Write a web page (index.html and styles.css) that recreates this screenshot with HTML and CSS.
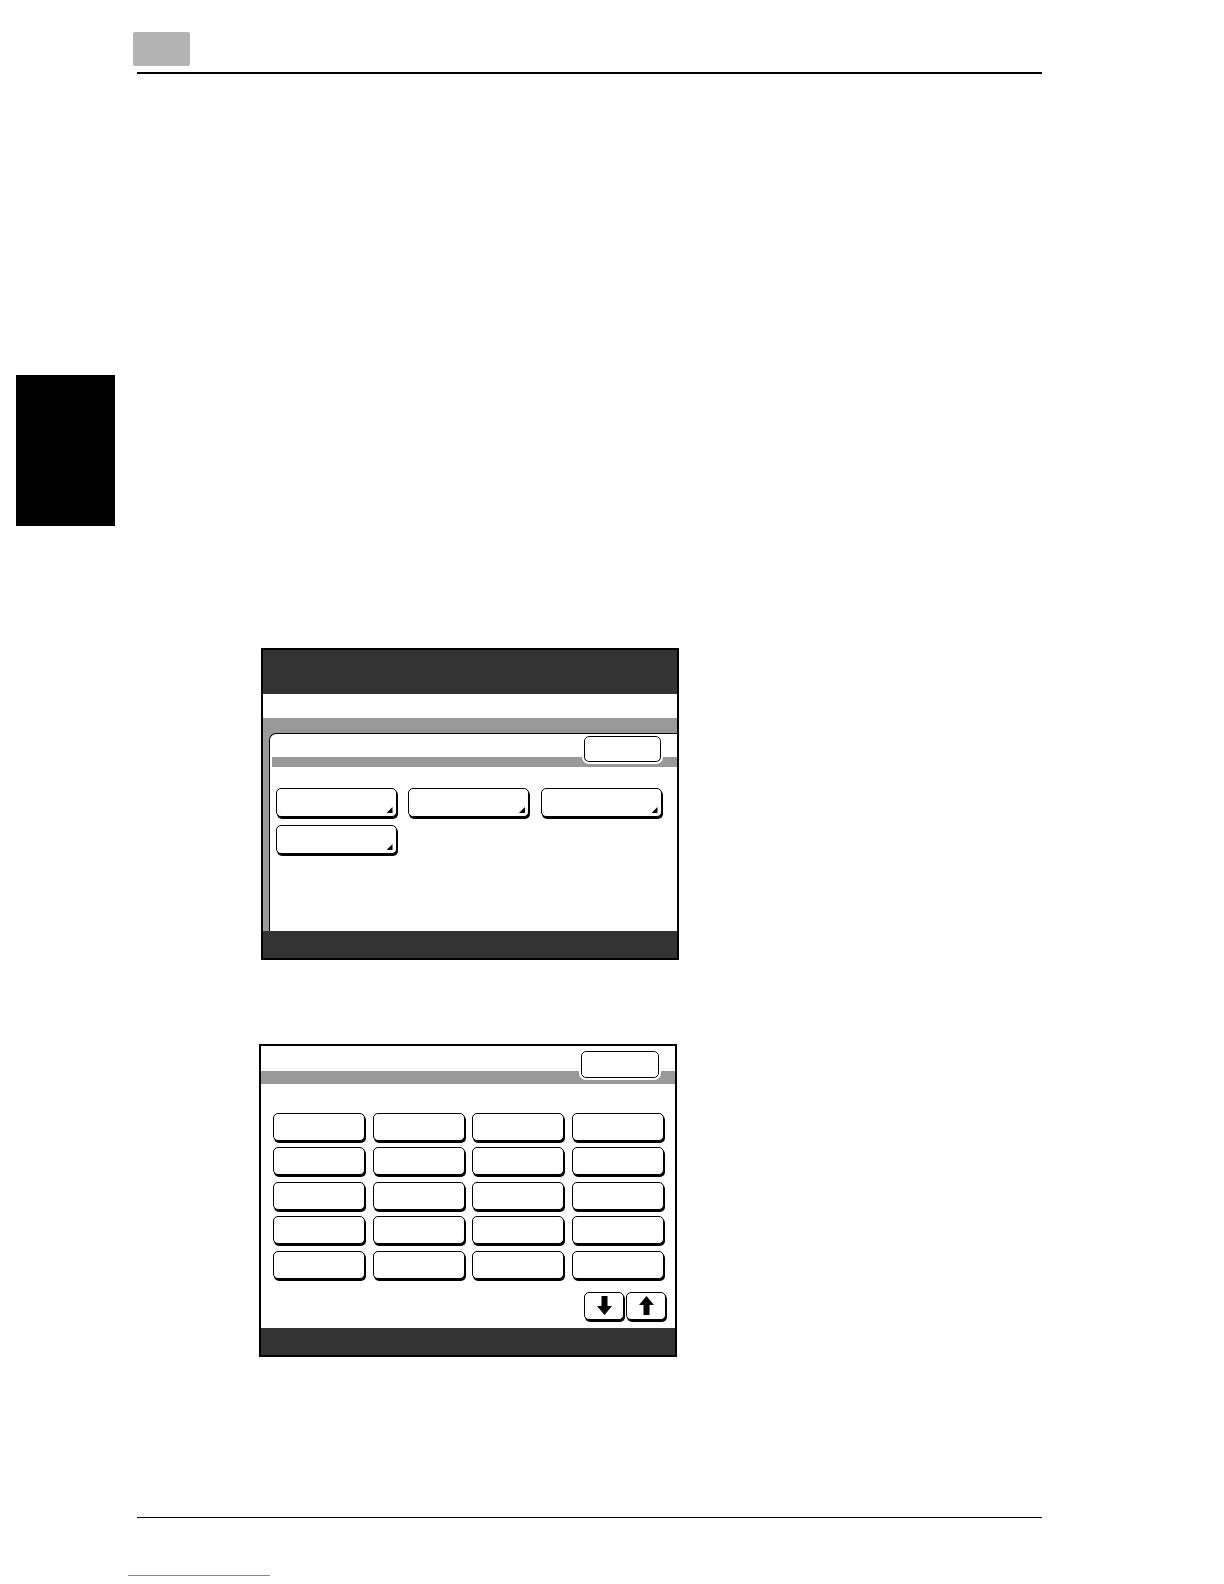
FILE: index.html
```html
<!DOCTYPE html>
<html lang="en">
<head>
<meta charset="utf-8">
<title>Screen reference</title>
<link rel="stylesheet" href="styles.css">
</head>
<body>
<div class="page">
  <header class="top">
    <div class="chapter-box"></div>
  </header>
  <div class="rule rule-top"></div>

  <div class="side-tab"></div>

  <section class="screen screen-one">
    <div class="s1-title"></div>
    <div class="s1-white"></div>
    <div class="s1-body">
      <div class="panel">
        <div class="panel-head">
          <div class="small-btn"></div>
        </div>
        <div class="bar bar-one"></div>
        <div class="grid-three">
          <div class="key key-tall key-menu"></div>
          <div class="key key-tall key-menu"></div>
          <div class="key key-tall key-menu"></div>
          <div class="key key-tall key-menu"></div>
        </div>
      </div>
    </div>
    <div class="dark-foot foot-one"></div>
  </section>

  <section class="screen screen-two">
    <div class="s2-head">
      <div class="small-btn small-btn-two"></div>
    </div>
    <div class="bar bar-two"></div>
    <div class="grid-four">
      <div class="key"></div><div class="key"></div><div class="key"></div><div class="key"></div>
      <div class="key"></div><div class="key"></div><div class="key"></div><div class="key"></div>
      <div class="key"></div><div class="key"></div><div class="key"></div><div class="key"></div>
      <div class="key"></div><div class="key"></div><div class="key"></div><div class="key"></div>
      <div class="key"></div><div class="key"></div><div class="key"></div><div class="key"></div>
    </div>
    <div class="arrows">
      <div class="key arrow-key">
        <svg width="15" height="19" viewBox="0 0 15 19"><path d="M4.5 0h6v10H15l-7.5 9L0 10h4.5z" fill="#000"/></svg>
      </div>
      <div class="key arrow-key">
        <svg width="15" height="19" viewBox="0 0 15 19"><path d="M4.5 19h6V9H15L7.5 0 0 9h4.5z" fill="#000"/></svg>
      </div>
    </div>
    <div class="dark-foot foot-two"></div>
  </section>

  <div class="rule rule-bottom"></div>
  <div class="link-line"></div>
</div>
</body>
</html>
```
FILE: styles.css
```css
* { box-sizing: border-box; }

html, body {
  margin: 0;
  padding: 0;
  background: #fff;
  font-family: "Liberation Sans", Arial, sans-serif;
}

.page {
  width: 1224px;
  min-height: 1584px;
  overflow: hidden;
}

.top {
  padding: 32px 0 0 133px;
}

.chapter-box {
  width: 57px;
  height: 34px;
  background: #b3b3b3;
  border-radius: 2px;
}

.rule {
  height: 1.6px;
  background: #000;
  margin-left: 137px;
  width: 905px;
}

.rule-top { margin-top: 6px; }

.side-tab {
  margin: 301px 0 0 16px;
  width: 99px;
  height: 151px;
  background: #000;
}

.screen {
  border: 2px solid #000;
  display: flex;
  flex-direction: column;
  background: #fff;
}

.screen-one {
  margin: 122px 0 0 261px;
  width: 418px;
  height: 312px;
}

.s1-title {
  height: 44px;
  background: #333;
}

.s1-white {
  height: 24px;
  background: #fff;
}

.s1-body {
  height: 213px;
  background: #999;
  padding: 15px 0 0 6px;
  display: flex;
}

.panel {
  flex: 1;
  background: #fff;
  border-top: 1.5px solid #000;
  border-left: 1.5px solid #000;
  border-top-left-radius: 7px;
}

.panel-head {
  display: flex;
  justify-content: flex-end;
  padding: 2.5px 16px 0 0;
}

.small-btn {
  position: relative;
  z-index: 1;
  width: 77px;
  height: 26px;
  margin-bottom: -5px;
  background: #fff;
  border: 1.6px solid #000;
  border-radius: 5px;
  outline: 2px solid #fff;
  box-shadow: 0 1px 0 #000;
}

.bar {
  background: #999;
}

.bar-one {
  height: 10px;
  margin-left: 1.5px;
}

.key {
  position: relative;
  background: #fff;
  border: 1.5px solid #000;
  border-radius: 5px;
  box-shadow: 1px 2px 0 0 #000;
  height: 28px;
}

.key-tall { height: 29px; }

.key-menu::after {
  content: "";
  position: absolute;
  right: 3px;
  bottom: 3px;
  width: 6px;
  height: 6px;
  background: #000;
  clip-path: polygon(100% 0, 100% 100%, 0 100%);
}

.grid-three {
  display: grid;
  grid-template-columns: repeat(3, 121px);
  column-gap: 11.5px;
  row-gap: 8px;
  margin-top: 21px;
  padding-left: 5.5px;
}

.dark-foot {
  background: #333;
}

.foot-one { height: 27px; }

.screen-two {
  margin: 84px 0 0 259px;
  width: 418px;
  height: 313px;
}

.s2-head {
  display: flex;
  justify-content: flex-end;
  padding: 5px 16px 0 0;
}

.small-btn-two {
  width: 78px;
  height: 27px;
  margin-bottom: -7px;
}

.bar-two { height: 13px; }

.grid-four {
  display: grid;
  grid-template-columns: repeat(4, 92px);
  column-gap: 7.7px;
  row-gap: 6.5px;
  margin-top: 29px;
  padding-left: 12px;
}

.arrows {
  display: flex;
  justify-content: flex-end;
  gap: 2px;
  margin-top: 13px;
  padding-right: 9px;
}

.arrow-key {
  width: 40px;
  height: 28px;
  display: flex;
  align-items: center;
  justify-content: center;
}

.foot-two {
  margin-top: auto;
  height: 27px;
}

.rule-bottom { margin-top: 160px; }

.link-line {
  margin: 57px 0 0 128px;
  width: 142px;
  height: 1px;
  background: #6f86dc;
}
```
